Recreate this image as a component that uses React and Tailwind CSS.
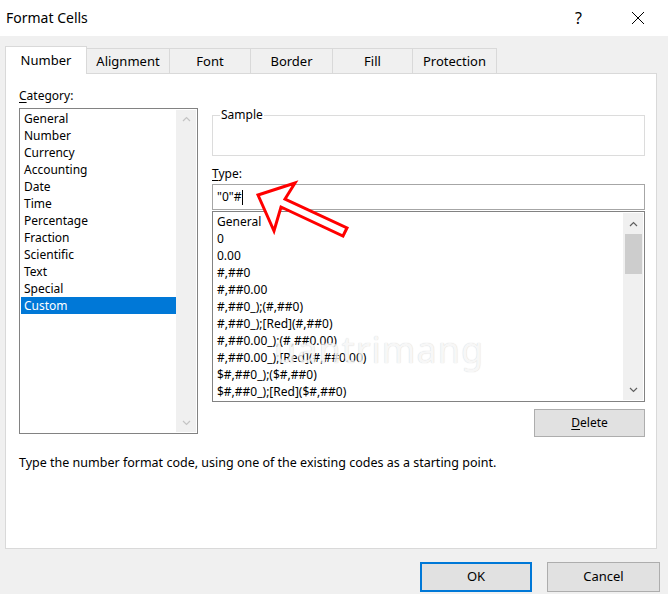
import { useState } from "react";

const categories = [
	"General",
	"Number",
	"Currency",
	"Accounting",
	"Date",
	"Time",
	"Percentage",
	"Fraction",
	"Scientific",
	"Text",
	"Special",
	"Custom",
];

const formats = [
	"General",
	"0",
	"0.00",
	"#,##0",
	"#,##0.00",
	"#,##0_);(#,##0)",
	"#,##0_);[Red](#,##0)",
	"#,##0.00_);(#,##0.00)",
	"#,##0.00_);[Red](#,##0.00)",
	"$#,##0_);($#,##0)",
	"$#,##0_);[Red]($#,##0)",
];

const tabs = ["Number", "Alignment", "Font", "Border", "Fill", "Protection"];
const tabWidths = ["w-[82px]", "w-[83px]", "w-[81px]", "w-[82px]", "w-[80px]", "w-[84px]"];

function Chevron({ up, color }) {
	return (
		<svg width="9" height="6" viewBox="0 0 9 6">
			<path
				d={up ? "M1 5 L4.5 1.5 L8 5" : "M1 1 L4.5 4.5 L8 1"}
				fill="none"
				stroke={color}
				strokeWidth="1.2"
			/>
		</svg>
	);
}

export default function App() {
	const [active] = useState("Custom");

	return (
		<div className="relative w-[668px] h-[594px] bg-[#f0f0f0] flex flex-col text-black font-['Noto_Sans',sans-serif] overflow-hidden">
			{/* title bar */}
			<div className="h-[36px] bg-white flex items-center pl-[6px] shrink-0">
				<span className="text-[14px] leading-none">Format Cells</span>
				<span className="ml-auto text-[16px] leading-none mr-[49px]">?</span>
				<svg width="14" height="14" viewBox="0 0 14 14" className="mr-[23px]">
					<path d="M1 1 L13 13 M13 1 L1 13" stroke="#000" strokeWidth="1" />
				</svg>
			</div>

			{/* tabs */}
			<div className="h-[37px] flex items-end pl-[5px] shrink-0">
				{tabs.map((t, i) =>
					i === 0 ? (
						<div
							key={t}
							className={`${tabWidths[i]} h-[28px] -mb-px relative z-10 bg-white border border-b-0 border-[#d9d9d9] flex items-center justify-center text-[13px]`}
						>
							{t}
						</div>
					) : (
						<div
							key={t}
							className={`${tabWidths[i]} h-[25px] border border-l-0 border-b-0 border-[#d9d9d9] flex items-center justify-center text-[13px] pt-px`}
						>
							{t}
						</div>
					)
				)}
			</div>

			{/* panel */}
			<div className="ml-[5px] w-[652px] h-[476px] bg-white border border-[#d9d9d9] shrink-0 pt-[13px] pl-[13px] relative">
				<div className="flex gap-[14px]">
					{/* category */}
					<div className="w-[179px] flex flex-col">
						<div className="text-[12px] leading-[17px]">
							<span className="underline underline-offset-2">C</span>ategory:
						</div>
						<div className="mt-[4px] h-[326px] border border-[#828282] flex p-px">
							<div className="flex-1">
								{categories.map((c) => (
									<div
										key={c}
										className={`h-[17px] text-[12px] leading-[17px] pl-[3px] ${
											c === active ? "bg-[#0078d7] text-white" : ""
										}`}
									>
										{c}
									</div>
								))}
							</div>
							<div className="w-[20px] bg-[#f0f0f0] flex flex-col items-center justify-between py-[6px]">
								<Chevron up color="#c4c4c4" />
								<Chevron color="#c4c4c4" />
							</div>
						</div>
					</div>

					{/* type */}
					<div className="w-[433px] flex flex-col">
						<fieldset className="border border-[#dcdcdc] h-[48px] mt-[21px] px-[7px]">
							<legend className="text-[12px] leading-[14px] px-px">Sample</legend>
						</fieldset>
						<div className="mt-[9px] text-[12px] leading-[17px]">
							<span className="underline underline-offset-2">T</span>ype:
						</div>
						<div className="mt-[2px] h-[26px] border border-[#a6a6a6] flex items-center pl-[4px] text-[12px]">
							"0"#
							<span className="w-px h-[15px] bg-black ml-px" />
						</div>
						<div className="mt-px h-[191px] border border-[#828282] flex p-px">
							<div className="flex-1">
								{formats.map((f) => (
									<div key={f} className="h-[17px] text-[12px] leading-[17px] pl-[3px] whitespace-pre">
										{f}
									</div>
								))}
							</div>
							<div className="w-[20px] bg-[#f0f0f0] flex flex-col items-center">
								<div className="h-[21px] flex items-center">
									<Chevron up color="#606060" />
								</div>
								<div className="w-[17px] h-[40px] bg-[#cdcdcd]" />
								<div className="mt-auto h-[21px] flex items-center">
									<Chevron color="#606060" />
								</div>
							</div>
						</div>
						<div className="mt-[7px] flex justify-end">
							<div className="w-[111px] h-[28px] bg-[#e1e1e1] border border-[#adadad] flex items-center justify-center text-[12px]">
								<span className="underline underline-offset-2">D</span>elete
							</div>
						</div>
					</div>
				</div>

				<div className="mt-[17px] text-[12.5px] leading-[17px]">
					Type the number format code, using one of the existing codes as a starting point.
				</div>

				{/* watermark */}
				<div className="absolute left-[268px] top-[258px] text-[36px] leading-none text-[#f6f6f6] opacity-80 tracking-[1px] [text-shadow:0_0_1px_#c4c4c4] pointer-events-none">
					uantrimang
				</div>
			</div>

			{/* footer */}
			<div className="flex justify-end gap-[15px] pt-[13px] pr-[8px]">
				<div className="w-[112px] h-[30px] bg-[#e1e1e1] border-2 border-[#0078d7] flex items-center justify-center text-[13px]">
					OK
				</div>
				<div className="w-[113px] h-[30px] bg-[#e1e1e1] border border-[#adadad] flex items-center justify-center text-[13px]">
					Cancel
				</div>
			</div>

			{/* red arrow annotation */}
			<svg className="absolute left-0 top-0 pointer-events-none" width="668" height="594" viewBox="0 0 668 594">
				<path
					d="M258 195 L295 183 L285 199 L347 228 L343 236 L281 207 L274 231 Z"
					fill="#fff"
					stroke="#ff0000"
					strokeWidth="3"
					strokeLinejoin="miter"
				/>
			</svg>
		</div>
	);
}
